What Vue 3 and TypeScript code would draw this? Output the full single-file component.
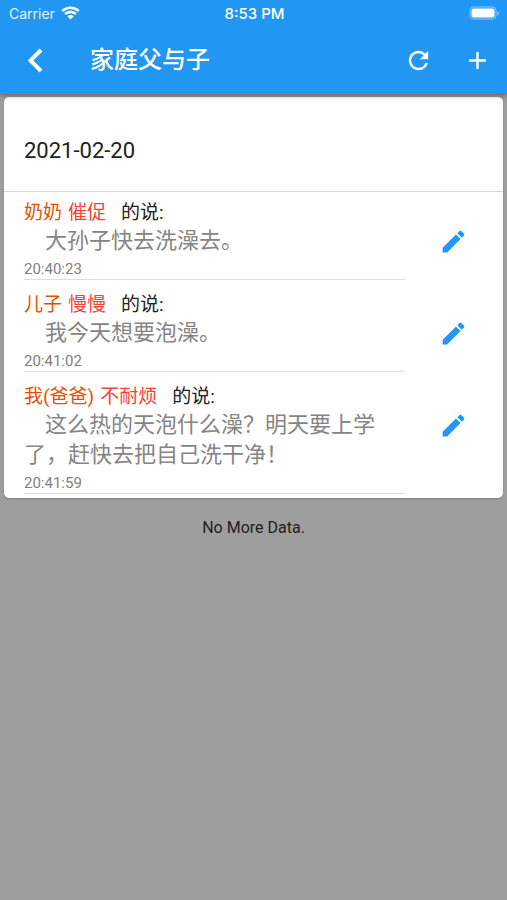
<script setup lang="ts">
interface Message {
  id: number
  speaker: string
  mood: string
  text: string
  time: string
}

const title = '家庭父与子'
const date = '2021-02-20'
const messages: Message[] = [
  { id: 1, speaker: '奶奶', mood: '催促', text: '大孙子快去洗澡去。', time: '20:40:23' },
  { id: 2, speaker: '儿子', mood: '慢慢', text: '我今天想要泡澡。', time: '20:41:02' },
  {
    id: 3,
    speaker: '我(爸爸)',
    mood: '不耐烦',
    text: '这么热的天泡什么澡？明天要上学了，赶快去把自己洗干净！',
    time: '20:41:59',
  },
]
</script>

<template>
  <div class="screen">
    <header class="top">
      <div class="status">
        <div class="carrier">
          <span>Carrier</span>
          <svg class="wifi" viewBox="0 0 19 14" aria-hidden="true">
            <path d="M1.3 5.1a11.8 11.8 0 0 1 16.4 0" />
            <path d="M4.1 8a7.8 7.8 0 0 1 10.8 0" />
            <path class="solid" d="M9.5 13.6 6.2 10.2a4.8 4.8 0 0 1 6.6 0z" />
          </svg>
        </div>
        <span class="clock">8:53 PM</span>
        <svg class="battery" viewBox="0 0 31 14" aria-hidden="true">
          <rect class="shell" x="1" y="1" width="26" height="12" rx="3.5" />
          <rect class="charge" x="2.5" y="2.5" width="23" height="9" rx="2" />
          <path class="tip" d="M28.5 5v4.400q1.500-.7 1.500-2.200t-1.500-2.200z" />
        </svg>
      </div>
      <nav class="bar">
        <button class="icon-button" type="button" aria-label="返回">
          <svg class="back" viewBox="0 0 29 29" aria-hidden="true">
            <path d="M20 4 9.500 14.500 20 25" />
          </svg>
        </button>
        <h1 class="title">{{ title }}</h1>
        <button class="icon-button" type="button" aria-label="刷新">
          <svg class="icon" viewBox="0 0 24 24" aria-hidden="true">
            <path
              d="M17.650 6.350A7.958 7.958 0 0 0 12 4c-4.420 0-7.990 3.580-7.990 8s3.570 8 7.990 8c3.730 0 6.840-2.550 7.730-6h-2.080A5.990 5.990 0 0 1 12 18c-3.310 0-6-2.690-6-6s2.690-6 6-6c1.660 0 3.140.69 4.220 1.780L13 11h7V4z"
            />
          </svg>
        </button>
        <button class="icon-button" type="button" aria-label="添加">
          <svg class="icon" viewBox="0 0 24 24" aria-hidden="true">
            <path d="M19 13h-6v6h-2v-6H5v-2h6V5h2v6h6z" />
          </svg>
        </button>
      </nav>
    </header>

    <main class="content">
      <section class="card">
        <h2 class="date">{{ date }}</h2>
        <ul class="messages">
          <li v-for="message in messages" :key="message.id" class="message">
            <div class="body">
              <p class="heading">
                <span class="speaker">{{ message.speaker }}</span>
                <span class="mood">{{ message.mood }}</span>
                <span class="says">的说:</span>
              </p>
              <p class="text">{{ message.text }}</p>
              <time class="time">{{ message.time }}</time>
            </div>
            <button class="icon-button edit" type="button" aria-label="编辑">
              <svg class="icon" viewBox="0 0 24 24" aria-hidden="true">
                <path
                  d="M3 17.250V21h3.750L17.810 9.940l-3.750-3.750zM20.710 7.040a.996.996 0 0 0 0-1.410l-2.340-2.340a.996.996 0 0 0-1.410 0l-1.830 1.830 3.750 3.750z"
                />
              </svg>
            </button>
          </li>
        </ul>
      </section>
      <p class="end">No More Data.</p>
    </main>
  </div>
</template>

<style>
body {
  margin: 0;
  background: #9e9e9e;
}
</style>

<style scoped>
.screen {
  min-height: 100vh;
  background: #9e9e9e;
  color: #212121;
  font-family: Roboto, 'Noto Sans CJK SC', sans-serif;
}

.top {
  position: relative;
  background: #2196f3;
  color: #fff;
  box-shadow: 0 2px 5px rgba(0, 0, 0, 0.35);
}

.status {
  display: grid;
  grid-template-columns: 1fr auto 1fr;
  align-items: center;
  height: 26px;
  padding: 0 7px 0 9px;
  font-family: Inter, sans-serif;
  font-size: 14px;
}

.carrier {
  display: flex;
  align-items: center;
  gap: 6px;
  color: #e3f2fd;
}

.wifi {
  width: 19px;
  height: 14px;
  fill: none;
  stroke: #fff;
  stroke-width: 2.6;
}

.wifi .solid {
  fill: #fff;
  stroke: none;
}

.clock {
  font-size: 15px;
  font-weight: 500;
}

.battery {
  justify-self: end;
  width: 31px;
  height: 14px;
}

.shell {
  fill: none;
  stroke: #90caf9;
  stroke-width: 1;
}

.charge {
  fill: #fff;
}

.tip {
  fill: #90caf9;
}

.bar {
  display: flex;
  align-items: center;
  height: 68px;
  padding: 0 0 0 6px;
}

.icon-button {
  display: flex;
  flex: none;
  align-items: center;
  justify-content: center;
  width: 59px;
  height: 59px;
  padding: 0;
  border: 0;
  background: none;
  color: inherit;
}

.icon {
  width: 29px;
  height: 29px;
  fill: currentColor;
}

.back {
  width: 29px;
  height: 29px;
  fill: none;
  stroke: currentColor;
  stroke-width: 4;
}

.title {
  flex: 1;
  margin: 0;
  padding-left: 25px;
  font-size: 24px;
  font-weight: 500;
  line-height: 32px;
}

.content {
  padding: 3px 4px 0;
}

.card {
  padding-bottom: 4px;
  border-radius: 5px;
  background: #fff;
  box-shadow: 0 1px 2px rgba(0, 0, 0, 0.2);
}

.date {
  margin: 0;
  padding: 38px 20px 24px;
  border-bottom: 1px solid #bbdefb;
  font-size: 22px;
  font-weight: 400;
  line-height: 32px;
}

.messages {
  display: flex;
  flex-direction: column;
  gap: 4px;
  margin: 0;
  padding: 0;
  list-style: none;
}

.message {
  display: flex;
  gap: 19px;
  padding: 0 20px;
}

.body {
  flex: 1;
  padding-top: 8px;
  border-bottom: 1px solid #dedede;
}

.heading {
  display: flex;
  gap: 6px;
  margin: 0;
  font-size: 19px;
  line-height: 26px;
}

.speaker {
  color: #e65100;
}

.mood {
  color: #f44336;
}

.says {
  padding-left: 9px;
}

.text {
  margin: 0;
  color: #858585;
  font-size: 22px;
  line-height: 30px;
  text-indent: 21px;
}

.time {
  display: block;
  padding-top: 4px;
  color: #808080;
  font-size: 15px;
  line-height: 19px;
}

.edit {
  margin-top: 20px;
  color: #2196f3;
}

.end {
  margin: 0;
  padding: 18px 0;
  font-size: 16px;
  line-height: 24px;
  text-align: center;
}
</style>
